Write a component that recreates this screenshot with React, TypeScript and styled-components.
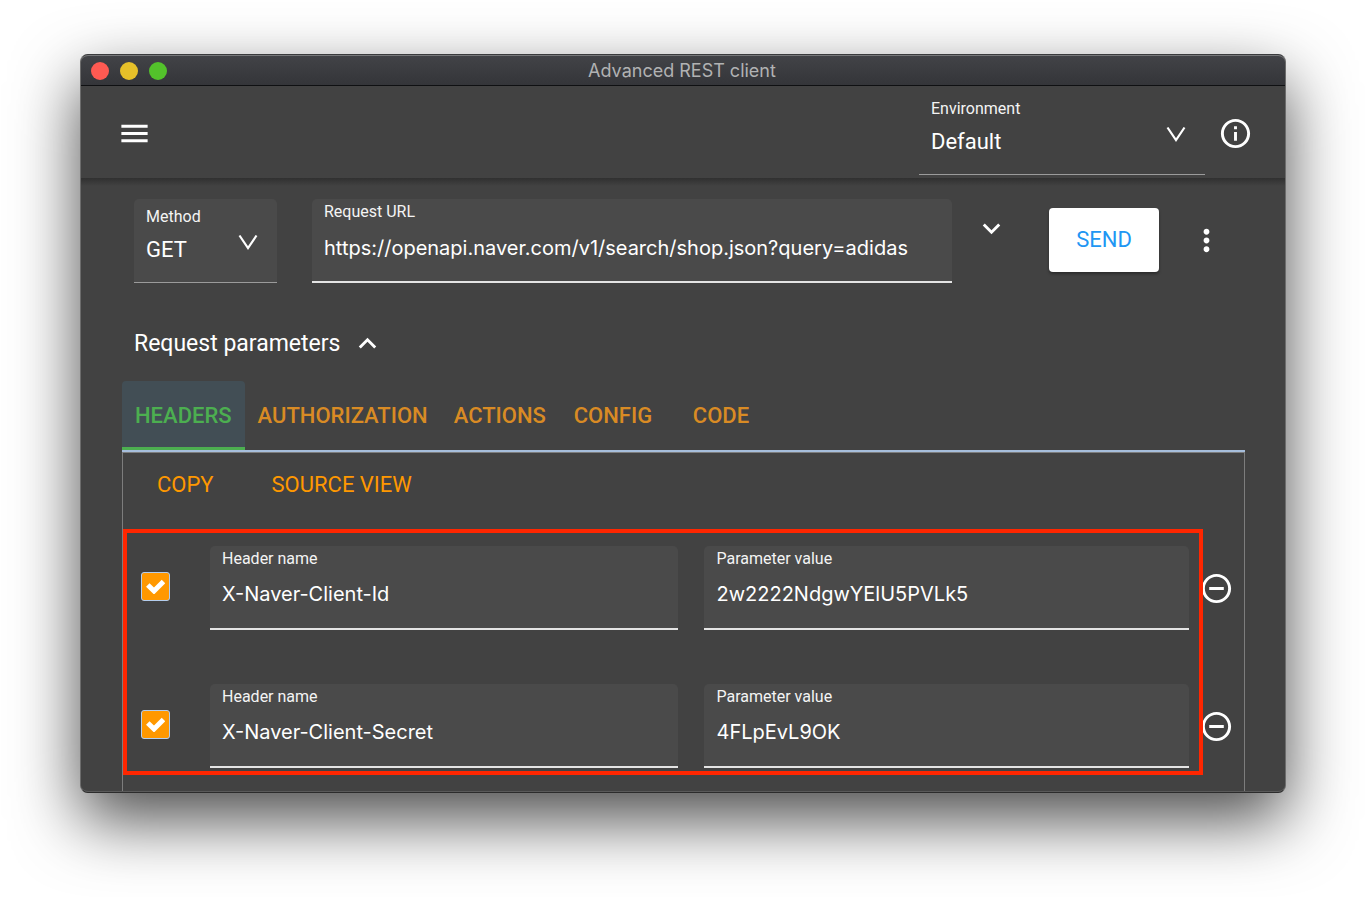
import React, { useId, useState } from "react";
import styled, { createGlobalStyle } from "styled-components";

const ui = `Roboto, "Liberation Sans", sans-serif`;
const system = `Inter, "Liberation Sans", sans-serif`;

const GlobalStyle = createGlobalStyle`
  *, *::before, *::after { box-sizing: border-box; }
  body { margin: 0; background: #fff; font-family: ${ui}; color: #fff; }
  button, input, select { font: inherit; color: inherit; margin: 0; }
`;

const Page = styled.div`
  padding: 54px 80px 104px;
`;

const Window = styled.main`
  border: 1px solid;
  border-color: #3a3b3d #6c6c6c #2c2c2c #6c6c6c;
  border-radius: 8px;
  background: #424242;
  box-shadow: 0 27px 66px rgba(0, 0, 0, 0.7);
`;

const TitleBar = styled.header`
  display: grid;
  grid-template-columns: 1fr auto 1fr;
  align-items: center;
  height: 31px;
  padding: 0 12px 0 10px;
  border-radius: 7px 7px 0 0;
  border-top: 1px solid #77787a;
  border-bottom: 1px solid #0f1012;
  background: linear-gradient(#424347, #343539);
`;

const Lights = styled.div`
  display: flex;
  gap: 11px;
`;

const Light = styled.button<{ $color: string }>`
  width: 18px;
  height: 18px;
  padding: 0;
  border: 0;
  border-radius: 50%;
  background: ${(p) => p.$color};
`;

const WindowTitle = styled.h1`
  margin: 0;
  font: 400 18px/28px ${system};
  color: #b1b2b3;
`;

const Toolbar = styled.div`
  display: flex;
  align-items: center;
  justify-content: space-between;
  height: 92px;
  padding: 2px 32px 0 36px;
`;

const ToolbarGroup = styled.div`
  display: flex;
  align-items: center;
  gap: 13px;
`;

const IconButton = styled.button`
  display: flex;
  flex: none;
  padding: 0;
  border: 0;
  background: none;
  color: #fff;
`;

const Glyph = styled.svg`
  display: block;
  width: 35px;
  height: 35px;
  fill: currentColor;
`;

const Content = styled.div`
  padding: 21px 40px 0 41px;
  border-radius: 0 0 7px 7px;
  border-bottom: 1px solid #5a5a5a;
  background: linear-gradient(#303030, #424242 8px);
`;

const SelectField = styled.div<{ $filled?: boolean; $width: number }>`
  position: relative;
  display: flex;
  flex-direction: column;
  flex: none;
  width: ${(p) => p.$width}px;
  height: 84px;
  padding-top: 8px;
  border-radius: 5px 5px 0 0;
  border-bottom: 1px solid #9b9b9b;
  background: ${(p) => (p.$filled ? "#4a4a4a" : "transparent")};
`;

const FieldLabel = styled.label`
  padding: 0 12px;
  font-size: 16px;
  line-height: 20px;
  color: #f4f4f4;
`;

const Select = styled.select`
  height: 46px;
  padding: 0 12px;
  border: 0;
  outline: 0;
  appearance: none;
  background: transparent;
  font-size: 22px;
  line-height: 28px;

  option { color: #222; }
`;

const Caret = styled.svg`
  position: absolute;
  right: 19px;
  top: 35px;
  width: 20px;
  height: 16px;
  fill: none;
  stroke: #fff;
  stroke-width: 2.2;
  pointer-events: none;
`;

const TextField = styled.div<{ $roomy?: boolean }>`
  display: flex;
  flex-direction: column;
  flex: 1;
  min-width: 0;
  height: 84px;
  padding-top: 3px;
  gap: ${(p) => (p.$roomy ? 12 : 11)}px;
  border-radius: 5px 5px 0 0;
  border-bottom: 2px solid #e4e4e4;
  background: #4a4a4a;
`;

const TextInput = styled.input`
  width: 100%;
  height: 28px;
  padding: 0 12px;
  border: 0;
  outline: 0;
  background: transparent;
  font: 400 20px/28px ${system};
`;

const RequestRow = styled.div`
  display: flex;
  align-items: flex-start;
  padding: 0 21px 0 12px;
`;

const UrlArea = styled.div`
  display: flex;
  flex: 1;
  gap: 22px;
  margin: 0 40px 0 35px;

  > button { margin-top: 12px; height: 35px; }
`;

const SendButton = styled.button`
  width: 110px;
  height: 64px;
  margin: 9px 30px 0 0;
  padding: 0 0 2px;
  border: 0;
  border-radius: 4px;
  background: #fff;
  color: #2196f3;
  font-size: 22px;
  box-shadow: 0 2px 3px rgba(0, 0, 0, 0.35);
`;

const MoreButton = styled(IconButton)`
  margin-top: 24px;
`;

const SectionTitle = styled.div`
  display: flex;
  align-items: center;
  gap: 10px;
  margin-top: 43px;
  padding-left: 12px;

  h2 { margin: 0; font-size: 23px; font-weight: 400; line-height: 35px; }
`;

const Tabs = styled.div`
  display: flex;
  height: 71px;
  margin-top: 20px;
  border-bottom: 2px solid #a6bedc;
`;

const Tab = styled.button<{ $active?: boolean }>`
  min-width: 108px;
  padding: 3px 13px 0;
  border: 0;
  border-bottom: 3px solid ${(p) => (p.$active ? "#4caf50" : "transparent")};
  border-radius: 4px 4px 0 0;
  background: ${(p) => (p.$active ? "#424e55" : "transparent")};
  color: ${(p) => (p.$active ? "#4caf50" : "#d98b24")};
  font-size: 22px;
  font-weight: 500;
`;

const Panel = styled.section`
  padding-bottom: 16px;
  border: 1px solid #7d7d7d;
  border-bottom: 0;
`;

const Actions = styled.div`
  display: flex;
  gap: 58px;
  height: 64px;
  padding-left: 34px;
`;

const TextButton = styled.button`
  padding: 0;
  border: 0;
  background: none;
  color: #ff9800;
  font-size: 22px;
  line-height: 64px;
`;

const HeaderList = styled.div`
  position: relative;
  display: grid;
  gap: 54px;
  margin-top: 12px;
  padding: 17px 10px 7px 18px;
`;

const Highlight = styled.div`
  position: absolute;
  inset: 0 41px 0 0;
  border: 4px solid #ff2600;
  pointer-events: none;
`;

const HeaderRow = styled.div`
  display: grid;
  grid-template-columns: 69px minmax(0, 9fr) minmax(0, 10fr) 35px;
  align-items: center;

  > :nth-child(3) { margin: 0 10px 0 26px; }
`;

const Check = styled.span`
  display: grid;
  width: 29px;
  padding-bottom: 4px;

  > * { grid-area: 1 / 1; }

  svg {
    place-self: center;
    width: 19px;
    height: 15px;
    fill: none;
    stroke: #fff;
    stroke-width: 5;
    pointer-events: none;
  }

  input:not(:checked) + svg { visibility: hidden; }
`;

const CheckInput = styled.input`
  width: 29px;
  height: 29px;
  border: 1px solid #b3cdee;
  border-radius: 3px;
  appearance: none;

  &:checked { background: #ff9800; }
`;

const paths = {
  menu: "M3 18h18v-2H3v2zm0-5h18v-2H3v2zm0-7v2h18V6H3z",
  info: "M11 17h2v-6h-2v6zm1-15C6.48 2 2 6.48 2 12s4.48 10 10 10 10-4.48 10-10S17.52 2 12 2zm0 18c-4.41 0-8-3.59-8-8s3.59-8 8-8 8 3.59 8 8-3.59 8-8 8zM11 9h2V7h-2v2z",
  down: "M16.59 8.59L12 13.17 7.41 8.59 6 10l6 6 6-6z",
  up: "M12 8l-6 6 1.41 1.41L12 10.83l4.59 4.58L18 14z",
  more: "M12 8c1.1 0 2-.9 2-2s-.9-2-2-2-2 .9-2 2 .9 2 2 2zm0 2c-1.1 0-2 .9-2 2s.9 2 2 2 2-.9 2-2-.9-2-2-2zm0 6c-1.1 0-2 .9-2 2s.9 2 2 2 2-.9 2-2-.9-2-2-2z",
  remove: "M7 11v2h10v-2H7zm5-9C6.48 2 2 6.48 2 12s4.48 10 10 10 10-4.48 10-10S17.52 2 12 2zm0 18c-4.41 0-8-3.59-8-8s3.59-8 8-8 8 3.59 8 8-3.59 8-8 8z",
};

function Icon({ name }: { name: keyof typeof paths }) {
  return (
    <Glyph viewBox="0 0 24 24" aria-hidden="true">
      <path d={paths[name]} />
    </Glyph>
  );
}

type DropdownProps = { label: string; options: string[]; width: number; filled?: boolean };

function Dropdown({ label, options, width, filled }: DropdownProps) {
  const id = useId();
  return (
    <SelectField $width={width} $filled={filled}>
      <FieldLabel htmlFor={id}>{label}</FieldLabel>
      <Select id={id}>
        {options.map((o) => (
          <option key={o}>{o}</option>
        ))}
      </Select>
      <Caret viewBox="0 0 20 16" aria-hidden="true">
        <path d="M1.500 1.500L10 14L18.500 1.500" />
      </Caret>
    </SelectField>
  );
}

function Input({ label, value, roomy }: { label: string; value: string; roomy?: boolean }) {
  const id = useId();
  return (
    <TextField $roomy={roomy}>
      <FieldLabel htmlFor={id}>{label}</FieldLabel>
      <TextInput id={id} defaultValue={value} spellCheck={false} />
    </TextField>
  );
}

const tabs = ["HEADERS", "AUTHORIZATION", "ACTIONS", "CONFIG", "CODE"];
const headers = [
  { name: "X-Naver-Client-Id", value: "2w2222NdgwYElU5PVLk5" },
  { name: "X-Naver-Client-Secret", value: "4FLpEvL9OK" },
];

export default function App() {
  const [active, setActive] = useState(tabs[0]);
  return (
    <Page>
      <GlobalStyle />
      <Window>
        <TitleBar>
          <Lights>
            <Light $color="#ff5a52" aria-label="Close" />
            <Light $color="#e6c029" aria-label="Minimize" />
            <Light $color="#53c22b" aria-label="Zoom" />
          </Lights>
          <WindowTitle>Advanced REST client</WindowTitle>
        </TitleBar>

        <Toolbar>
          <IconButton aria-label="Menu"><Icon name="menu" /></IconButton>
          <ToolbarGroup>
            <Dropdown label="Environment" options={["Default"]} width={286} />
            <IconButton aria-label="Information"><Icon name="info" /></IconButton>
          </ToolbarGroup>
        </Toolbar>

        <Content>
          <RequestRow>
            <Dropdown label="Method" options={["GET", "POST", "PUT", "DELETE"]} width={143} filled />
            <UrlArea>
              <Input label="Request URL" value="https://openapi.naver.com/v1/search/shop.json?query=adidas" roomy />
              <IconButton aria-label="URL editor"><Icon name="down" /></IconButton>
            </UrlArea>
            <SendButton>SEND</SendButton>
            <MoreButton aria-label="More options"><Icon name="more" /></MoreButton>
          </RequestRow>

          <SectionTitle>
            <h2>Request parameters</h2>
            <IconButton aria-label="Collapse"><Icon name="up" /></IconButton>
          </SectionTitle>

          <Tabs role="tablist">
            {tabs.map((t) => (
              <Tab key={t} role="tab" aria-selected={t === active} $active={t === active} onClick={() => setActive(t)}>
                {t}
              </Tab>
            ))}
          </Tabs>

          <Panel>
            <Actions>
              <TextButton>COPY</TextButton>
              <TextButton>SOURCE VIEW</TextButton>
            </Actions>
            <HeaderList>
              {headers.map((h) => (
                <HeaderRow key={h.name}>
                  <Check>
                    <CheckInput type="checkbox" defaultChecked aria-label={`Enable ${h.name}`} />
                    <svg viewBox="0 0 19 15" aria-hidden="true">
                      <path d="M1.800 6L8 12L17.500 2.500" />
                    </svg>
                  </Check>
                  <Input label="Header name" value={h.name} />
                  <Input label="Parameter value" value={h.value} />
                  <IconButton aria-label={`Remove ${h.name}`}><Icon name="remove" /></IconButton>
                </HeaderRow>
              ))}
              <Highlight />
            </HeaderList>
          </Panel>
        </Content>
      </Window>
    </Page>
  );
}
